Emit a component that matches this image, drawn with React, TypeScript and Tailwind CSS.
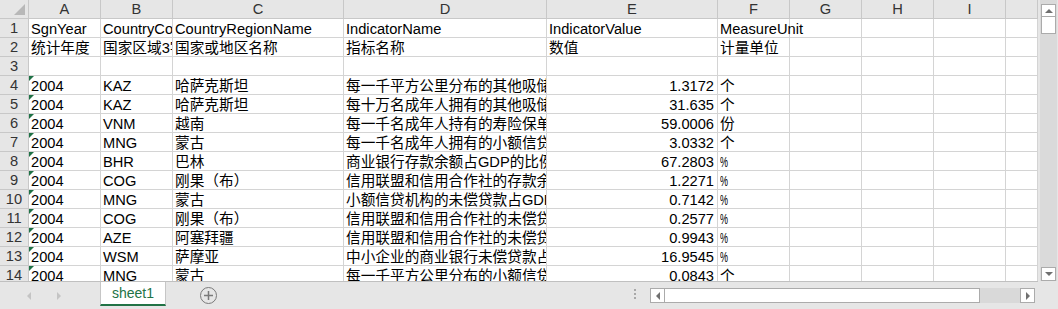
import React from 'react'

const font = "font-['Liberation_Sans','Noto_Sans_CJK_SC',sans-serif]"

const colLetters = ['A', 'B', 'C', 'D', 'E', 'F', 'G', 'H', 'I', '']

type Row = {
  a?: string
  b?: string
  c?: string
  d?: string
  e?: string
  f?: string
  flag?: boolean
}

const rows: Row[] = [
  { a: 'SgnYear', b: 'CountryCode', c: 'CountryRegionName', d: 'IndicatorName', e: 'IndicatorValue', f: 'MeasureUnit' },
  { a: '统计年度', b: '国家区域3字码', c: '国家或地区名称', d: '指标名称', e: '数值', f: '计量单位' },
  {},
  { a: '2004', b: 'KAZ', c: '哈萨克斯坦', d: '每一千平方公里分布的其他吸储机构网点数', e: '1.3172', f: '个', flag: true },
  { a: '2004', b: 'KAZ', c: '哈萨克斯坦', d: '每十万名成年人拥有的其他吸储机构网点数', e: '31.635', f: '个', flag: true },
  { a: '2004', b: 'VNM', c: '越南', d: '每一千名成年人持有的寿险保单数', e: '59.0006', f: '份', flag: true },
  { a: '2004', b: 'MNG', c: '蒙古', d: '每一千名成年人拥有的小额信贷机构账户数', e: '3.0332', f: '个', flag: true },
  { a: '2004', b: 'BHR', c: '巴林', d: '商业银行存款余额占GDP的比例', e: '67.2803', f: '%', flag: true },
  { a: '2004', b: 'COG', c: '刚果（布）', d: '信用联盟和信用合作社的存款余额占GDP的比例', e: '1.2271', f: '%', flag: true },
  { a: '2004', b: 'MNG', c: '蒙古', d: '小额信贷机构的未偿贷款占GDP的比例', e: '0.7142', f: '%', flag: true },
  { a: '2004', b: 'COG', c: '刚果（布）', d: '信用联盟和信用合作社的未偿贷款占GDP的比例', e: '0.2577', f: '%', flag: true },
  { a: '2004', b: 'AZE', c: '阿塞拜疆', d: '信用联盟和信用合作社的未偿贷款占GDP的比例', e: '0.9943', f: '%', flag: true },
  { a: '2004', b: 'WSM', c: '萨摩亚', d: '中小企业的商业银行未偿贷款占GDP的比例', e: '16.9545', f: '%', flag: true },
  { a: '2004', b: 'MNG', c: '蒙古', d: '每一千平方公里分布的小额信贷机构网点数', e: '0.0843', f: '个', flag: true },
]

const base =
  'relative h-[19px] border-r border-b border-[#d4d4d4] whitespace-nowrap flex items-end leading-[16px] text-[14.67px] text-black'
const cell = `${base} overflow-hidden`

const Arrow = ({ dir, color = '#707070' }: { dir: 'up' | 'down' | 'left' | 'right'; color?: string }) => {
  const pts = {
    up: '0,4 4,0 8,4',
    down: '0,0 8,0 4,4',
    left: '4,0 4,8 0,4',
    right: '0,0 0,8 4,4',
  }[dir]
  const vert = dir === 'up' || dir === 'down'
  return (
    <svg width={vert ? 8 : 4} height={vert ? 4 : 8} viewBox={vert ? '0 0 8 4' : '0 0 4 8'}>
      <polygon points={pts} fill={color} />
    </svg>
  )
}

const Unit = ({ v }: { v?: string }) =>
  v === '%' ? (
    <span className="inline-block origin-left scale-x-[0.6] text-[15px]">%</span>
  ) : (
    <span>{v}</span>
  )

export default function App() {
  return (
    <div className={`w-[1058px] h-[309px] overflow-hidden bg-[#e6e6e6] ${font} flex flex-col`}>
      <div className="h-[282px] flex">
        {/* sheet grid */}
        <div className="w-[1038px] h-[282px] overflow-hidden bg-white border-b border-[#c0c0c0]">
          <div className="grid grid-cols-[29px_72px_72px_171px_203px_171px_72px_72px_72px_72px_32px]">
            {/* column headers */}
            <div className="relative h-[19px] bg-[#e6e6e6] border-r border-b border-[#c8c8c8]">
              <svg className="absolute left-[14px] top-[4px]" width="11" height="11" viewBox="0 0 11 11">
                <polygon points="11,0 11,11 0,11" fill="#b8b8b8" />
              </svg>
            </div>
            {colLetters.map((l, i) => (
              <div
                key={i}
                className="h-[19px] bg-[#e6e6e6] border-r border-b border-[#c8c8c8] flex items-center justify-center text-[14.67px] text-[#333]"
              >
                {l}
              </div>
            ))}

            {rows.map((r, i) => (
              <React.Fragment key={i}>
                <div className="h-[19px] bg-[#e6e6e6] border-r border-b border-[#c8c8c8] flex items-center justify-center text-[14.67px] text-[#333]">
                  {i + 1}
                </div>
                <div className={`${cell} pl-[2px]`}>
                  {r.flag && (
                    <div className="absolute left-0 top-0 w-0 h-0 border-t-[5px] border-r-[5px] border-t-[#1e7145] border-r-transparent" />
                  )}
                  {r.a}
                </div>
                <div className={`${cell} pl-[2px]`}>{r.b}</div>
                <div className={`${cell} pl-[2px]`}>{r.c}</div>
                <div className={`${cell} pl-[2px]`}>{r.d}</div>
                <div className={`${cell} ${i < 2 ? 'pl-[2px]' : 'justify-end pr-[3px]'}`}>{r.e}</div>
                <div className={`${base} pl-[2px]`}>
                  <Unit v={r.f} />
                </div>
                <div className={cell} />
                <div className={cell} />
                <div className={cell} />
                <div className={cell} />
              </React.Fragment>
            ))}
          </div>
        </div>

        {/* vertical scrollbar */}
        <div className="w-[20px] h-[282px] pl-[2px] pr-[1px]">
          <div className="h-[281px] bg-[#dadada] flex flex-col px-[1px] pt-[4px]">
            <div className="h-[13px] bg-white border border-[#ababab] flex items-center justify-center">
              <Arrow dir="up" />
            </div>
            <div className="h-[17px] bg-white border border-[#ababab] border-t-0" />
            <div className="flex-1" />
            <div className="h-[14px] bg-white border border-[#ababab] flex items-center justify-center">
              <Arrow dir="down" />
            </div>
          </div>
        </div>
      </div>

      {/* sheet tabs + horizontal scrollbar */}
      <div className="h-[27px] flex items-start">
        <div className="w-[100px] h-[27px] flex items-center">
          <div className="ml-[27px]">
            <Arrow dir="left" color="#c4c4c4" />
          </div>
          <div className="ml-[26px]">
            <Arrow dir="right" color="#c4c4c4" />
          </div>
        </div>
        <div className="w-[66px] h-[24px] pt-[1px] bg-white border-x border-[#c6c6c6] border-b-[2px] border-b-[#217346] flex items-center justify-center text-[14px] text-[#217346]">
          sheet1
        </div>
        <div className="ml-[34px] mt-[5px] w-[17px] h-[17px] rounded-full border-[1.5px] border-[#7a7a7a] flex items-center justify-center">
          <svg width="9" height="9" viewBox="0 0 9 9">
            <rect x="3.75" y="0" width="1.5" height="9" fill="#7a7a7a" />
            <rect x="0" y="3.75" width="9" height="1.5" fill="#7a7a7a" />
          </svg>
        </div>
        <div className="ml-[417px] mt-[7px] flex flex-col gap-[2px]">
          <div className="w-[2px] h-[2px] bg-[#a8a8a8]" />
          <div className="w-[2px] h-[2px] bg-[#a8a8a8]" />
          <div className="w-[2px] h-[2px] bg-[#a8a8a8]" />
        </div>
        <div className="ml-[14px] mt-[6px] h-[15px] w-[385px] flex">
          <div className="w-[15px] h-[15px] bg-white border border-[#ababab] flex items-center justify-center">
            <Arrow dir="left" />
          </div>
          <div className="w-[315px] h-[15px] bg-white border border-l-0 border-[#ababab]" />
          <div className="flex-1 h-[15px] bg-[#d9d9d9]" />
          <div className="w-[15px] h-[15px] bg-white border border-[#ababab] flex items-center justify-center">
            <Arrow dir="right" />
          </div>
        </div>
      </div>
    </div>
  )
}
